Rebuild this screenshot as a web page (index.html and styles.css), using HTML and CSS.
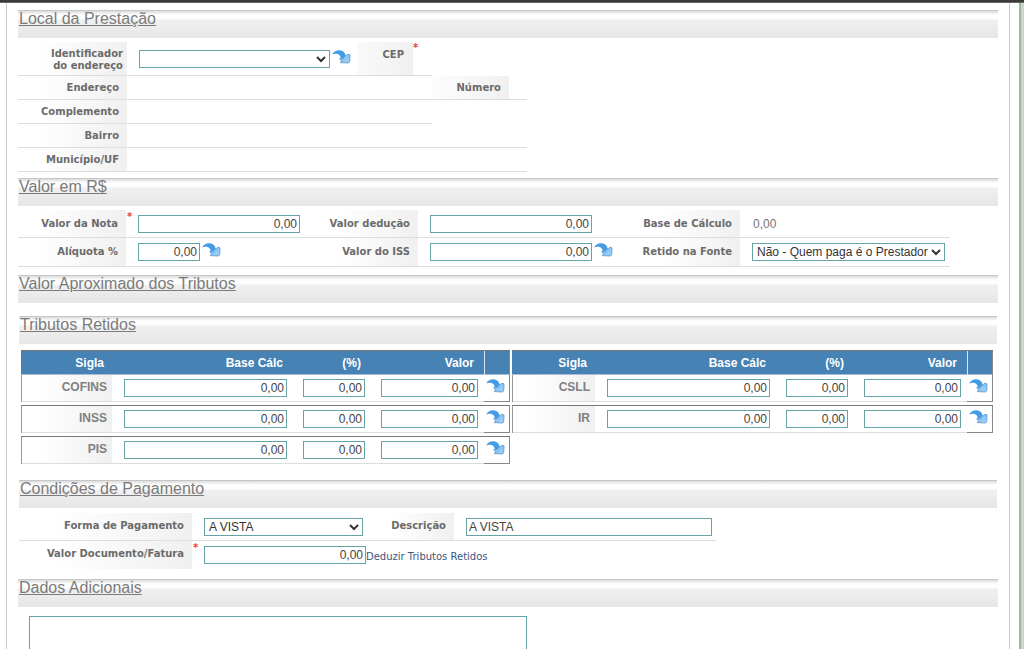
FILE: index.html
```html
<!DOCTYPE html>
<html lang="pt-BR">
<head>
<meta charset="utf-8">
<title>Emissão de Nota Fiscal</title>
<link rel="stylesheet" href="styles.css">
</head>
<body>
<svg class="defs" aria-hidden="true">
  <defs>
    <linearGradient id="arrow-fill" x1="0" y1="0" x2="1" y2="1">
      <stop offset="0" stop-color="#6db6f2"/>
      <stop offset="1" stop-color="#a8d4f7"/>
    </linearGradient>
  </defs>
  <symbol id="refresh" viewBox="0 0 19 14">
    <path d="M0.2 4.4C2 1.2 4.8 0 7.6 0.3C10.8 0.6 13 2.4 13.6 5.4L14 7.4L8.6 8.4C8.8 5 5.4 2.8 0.2 4.4Z" fill="#459ce6"/>
    <path d="M12.4 6L14 5.8L15.4 4.4L18 4.8L17.8 11L16.6 13L8.4 12.6L9.6 10.6L7.6 8.8L11.4 8.4Z" fill="url(#arrow-fill)" stroke="#4f90cb" stroke-width="0.8"/>
  </symbol>
</svg>
<div class="topbar"></div>
<div class="shell">
<main class="page">

  <section>
    <h2 class="title"><a href="#local" id="local">Local da Prestação</a></h2>
    <div class="form form-local">
      <div class="row row-tall row-short">
        <label class="label label-wrap" for="ident">Identificador do endereço</label>
        <div class="field">
          <select id="ident" class="box w-ident"><option></option></select>
          <button class="icon" type="button" aria-label="Atualizar endereço"><svg><use href="#refresh"/></svg></button>
        </div>
        <span class="label label-cep">CEP</span><span class="req">*</span>
      </div>
      <div class="row row-num"><span class="label">Endereço</span><span class="label label-num">Número</span></div>
      <div class="row row-short"><span class="label">Complemento</span></div>
      <div class="row"><span class="label">Bairro</span></div>
      <div class="row"><span class="label">Município/UF</span></div>
    </div>
  </section>

  <section>
    <h2 class="title"><a href="#valor" id="valor">Valor em R$</a></h2>
    <div class="form form-valor">
      <div class="row">
        <label class="label" for="nota">Valor da Nota</label>
        <div class="field"><span class="req">*</span><input id="nota" class="box num w-money" value="0,00"></div>
        <label class="label" for="deducao">Valor dedução</label>
        <div class="field"><input id="deducao" class="box num w-money" value="0,00"></div>
        <span class="label">Base de Cálculo</span>
        <div class="field"><output class="value">0,00</output></div>
      </div>
      <div class="row">
        <label class="label" for="aliq">Alíquota %</label>
        <div class="field"><input id="aliq" class="box num w-pct" value="0,00"><button class="icon" type="button" aria-label="Calcular alíquota"><svg><use href="#refresh"/></svg></button></div>
        <label class="label" for="iss">Valor do ISS</label>
        <div class="field"><input id="iss" class="box num w-money" value="0,00"><button class="icon" type="button" aria-label="Calcular ISS"><svg><use href="#refresh"/></svg></button></div>
        <label class="label" for="retido">Retido na Fonte</label>
        <div class="field"><select id="retido" class="box w-retido"><option>Não - Quem paga é o Prestador</option></select></div>
      </div>
    </div>
  </section>

  <section>
    <h2 class="title title-aprox"><a href="#aprox" id="aprox">Valor Aproximado dos Tributos</a></h2>
  </section>

  <section class="inset">
    <h2 class="title"><a href="#tributos" id="tributos">Tributos Retidos</a></h2>
    <div class="taxes">
      <table class="tax">
        <thead><tr><th>Sigla</th><th>Base Cálc</th><th>(%)</th><th>Valor</th><th></th></tr></thead>
        <tbody>
          <tr><th>COFINS</th><td><input class="box num" aria-label="COFINS base" value="0,00"></td><td><input class="box num" aria-label="COFINS %" value="0,00"></td><td><input class="box num" aria-label="COFINS valor" value="0,00"></td><td><button class="icon" type="button" aria-label="Calcular COFINS"><svg><use href="#refresh"/></svg></button></td></tr>
          <tr><th>INSS</th><td><input class="box num" aria-label="INSS base" value="0,00"></td><td><input class="box num" aria-label="INSS %" value="0,00"></td><td><input class="box num" aria-label="INSS valor" value="0,00"></td><td><button class="icon" type="button" aria-label="Calcular INSS"><svg><use href="#refresh"/></svg></button></td></tr>
          <tr><th>PIS</th><td><input class="box num" aria-label="PIS base" value="0,00"></td><td><input class="box num" aria-label="PIS %" value="0,00"></td><td><input class="box num" aria-label="PIS valor" value="0,00"></td><td><button class="icon" type="button" aria-label="Calcular PIS"><svg><use href="#refresh"/></svg></button></td></tr>
        </tbody>
      </table>
      <table class="tax">
        <thead><tr><th>Sigla</th><th>Base Cálc</th><th>(%)</th><th>Valor</th><th></th></tr></thead>
        <tbody>
          <tr><th>CSLL</th><td><input class="box num" aria-label="CSLL base" value="0,00"></td><td><input class="box num" aria-label="CSLL %" value="0,00"></td><td><input class="box num" aria-label="CSLL valor" value="0,00"></td><td><button class="icon" type="button" aria-label="Calcular CSLL"><svg><use href="#refresh"/></svg></button></td></tr>
          <tr><th>IR</th><td><input class="box num" aria-label="IR base" value="0,00"></td><td><input class="box num" aria-label="IR %" value="0,00"></td><td><input class="box num" aria-label="IR valor" value="0,00"></td><td><button class="icon" type="button" aria-label="Calcular IR"><svg><use href="#refresh"/></svg></button></td></tr>
        </tbody>
      </table>
    </div>
  </section>

  <section class="inset">
    <h2 class="title"><a href="#pagamento" id="pagamento">Condições de Pagamento</a></h2>
    <div class="form form-pag">
      <div class="row">
        <label class="label" for="forma">Forma de Pagamento</label>
        <div class="field"><select id="forma" class="box w-forma"><option>A VISTA</option></select></div>
        <label class="label label-desc" for="desc">Descrição</label>
        <div class="field"><input id="desc" class="box w-desc" value="A VISTA"></div>
      </div>
      <div class="row row-last">
        <label class="label" for="fatura">Valor Documento/Fatura</label>
        <div class="field"><span class="req">*</span><input id="fatura" class="box num w-money" value="0,00"><a class="deduct" href="#tributos">Deduzir Tributos Retidos</a></div>
      </div>
    </div>
  </section>

  <section>
    <h2 class="title"><a href="#dados" id="dados">Dados Adicionais</a></h2>
    <textarea class="notes" aria-labelledby="dados"></textarea>
  </section>

</main>
<div class="edge"></div>
</div>
</body>
</html>
```

FILE: styles.css
```css
* { box-sizing: border-box; }

body {
  margin: 0;
  height: 100vh;
  overflow: hidden;
  display: flex;
  flex-direction: column;
  background: #fff;
  color: #666;
  font: 12px "Liberation Sans", Arial, sans-serif;
}

.defs { position: absolute; width: 0; height: 0; }

.topbar {
  flex: none;
  height: 3px;
  background: #3b3939;
  border-bottom: 1px solid #666;
}

.shell { flex: 1; min-height: 0; display: flex; }

.page {
  flex: 1;
  min-width: 0;
  overflow: hidden;
  margin: 0 9px 0 6px;
  padding: 7px 11px 0;
  border: solid #ccc;
  border-width: 0 1px;
}

.edge {
  width: 5px;
  background: #d2d0d2;
  border-left: 2px solid #93c193;
}

/* Section headings */
.title {
  margin: 0;
  height: 28px;
  padding-left: 1px;
  border-top: 1px solid #c6c6c6;
  background: linear-gradient(#dcdcdc 0, #fff 4px, #fdfdfd 8px, #f0f0f0 9px, #e6e6e6 100%);
  font-size: 16px;
  font-weight: 400;
  line-height: 16px;
}
.title a { color: #7b7b7b; }
.title-aprox { margin-bottom: 13px; }
.inset .title { margin-left: 1px; margin-right: 1px; }

/* Form rows */
.row { display: flex; border-bottom: 1px solid #ddd; }

.label {
  flex: none;
  padding-right: 8px;
  background: linear-gradient(to right, #fff 20%, #f0f0f0);
  color: #6b6b6b;
  font: bold 10px/12px "DejaVu Sans", Verdana, sans-serif;
  text-align: right;
}

.field { position: relative; display: flex; align-items: center; }

.box {
  height: 18px;
  margin: 0;
  padding: 0 2px;
  border: 1px solid #65a3a6;
  border-radius: 0;
  outline: 0;
  background: #fff;
  color: #444;
  font: 12px "Liberation Sans", Arial, sans-serif;
}
.num { text-align: right; }
select.box { padding: 0; color: #333; }

.w-ident { width: 191px; }
.w-money { width: 162px; }
.w-pct { width: 62px; }
.w-retido { width: 193px; }
.w-forma { width: 159px; }
.w-desc { width: 246px; }

.icon {
  flex: none;
  padding: 0 0 4px;
  margin-left: 2px;
  border: 0;
  background: none;
  line-height: 0;
}
.icon svg { width: 19px; height: 14px; }

.req { color: #f0402c; font: bold 10px/12px "DejaVu Sans", Verdana, sans-serif; }
.field .req { position: absolute; left: 1px; top: 1px; }

.form-local { width: 509px; padding: 4px 0 6px; }
.form-local .row { height: 24px; }
.form-local .row-tall { height: 34px; }
.form-local .row-short { width: 414px; }
.form-local .label { width: 109px; padding-top: 6px; }
.form-local .label-wrap { padding: 6px 4px 0 28px; }
.form-local .field { padding-left: 12px; }
.form-local .label-cep {
  width: 56px;
  margin-left: 6px;
  padding: 7px 9px 0 0;
  background: linear-gradient(to right, #fafafa, #f0f0f0);
}
.form-local .label-num {
  width: 78px;
  margin-left: 304px;
  background: linear-gradient(to right, #fdfdfd, #f0f0f0);
}

.form-valor { width: 932px; padding: 4px 0 8px; }
.form-valor .row { display: grid; grid-template-columns: 108px 193px 99px 222px 100px 1fr; height: 28px; }
.form-valor .row + .row { height: 29px; }
.form-valor .label { padding-top: 8px; }
.form-valor .field { padding-left: 12px; }
.value { padding-left: 1px; color: #777; }

.form-pag { width: 697px; margin-left: 1px; padding: 5px 0 10px; }
.form-pag .row { height: 28px; }
.form-pag .label { width: 173px; padding-top: 7px; }
.form-pag .field { padding-left: 12px; }
.form-pag .label-desc { width: 76px; margin-left: 15px; }
.form-pag .row-last { border: 0; }

.deduct {
  padding-top: 4px;
  color: #3c5580;
  font: 10px/12px "DejaVu Sans", Verdana, sans-serif;
  text-decoration: none;
}

/* Withheld taxes */
.taxes {
  display: grid;
  grid-template-columns: 489fr 481fr;
  gap: 2px;
  align-items: start;
  margin: 6px 5px 13px 3px;
}
.tax, .tax thead, .tax tbody { display: block; }
.tax tr {
  display: grid;
  grid-template-columns: 1fr 175px 78px 119px 26px;
}
.tax thead tr {
  height: 25px;
  border-top: 1px solid #777;
  border-bottom: 1px solid #a9bdd8;
  background: #4682b4;
}
.tax thead th { padding: 0 8px 0 0; color: #fff; line-height: 24px; text-align: right; }
.tax thead th:nth-child(2), .tax thead th:nth-child(3) { padding-right: 4px; }
.tax thead th:nth-child(4) { padding-right: 10px; }
.tax thead th:last-child {
  border-left: 1px solid #dce6f0;
  border-right: 1px solid #888;
}
.tax tbody tr {
  height: 28px;
  margin-bottom: 3px;
  border-top: 1px solid #777;
  border-left: 1px solid #999;
}
.tax tbody tr:first-child { height: 27px; border-top: 0; }
.tax td, .tax tbody th { padding: 0; border-bottom: 1px solid #ddd; }
.tax tbody th {
  padding: 5px 5px 0 0;
  background: linear-gradient(to right, #fff 20%, #f0f0f0);
  color: #808080;
  text-align: right;
}
.tax td { display: flex; align-items: center; padding-left: 16px; }
.tax td:nth-child(2) { padding-left: 12px; }
.tax td .box { width: 100%; }
.tax td:nth-child(4) { padding-right: 6px; }
.tax td:last-child {
  padding: 0;
  border: solid #888;
  border-width: 0 1px 1px 0;
}

.notes {
  display: block;
  width: 498px;
  height: 90px;
  margin: 9px 0 0 11px;
  border: 1px solid #65a3a6;
  outline: 0;
  resize: none;
}
```
